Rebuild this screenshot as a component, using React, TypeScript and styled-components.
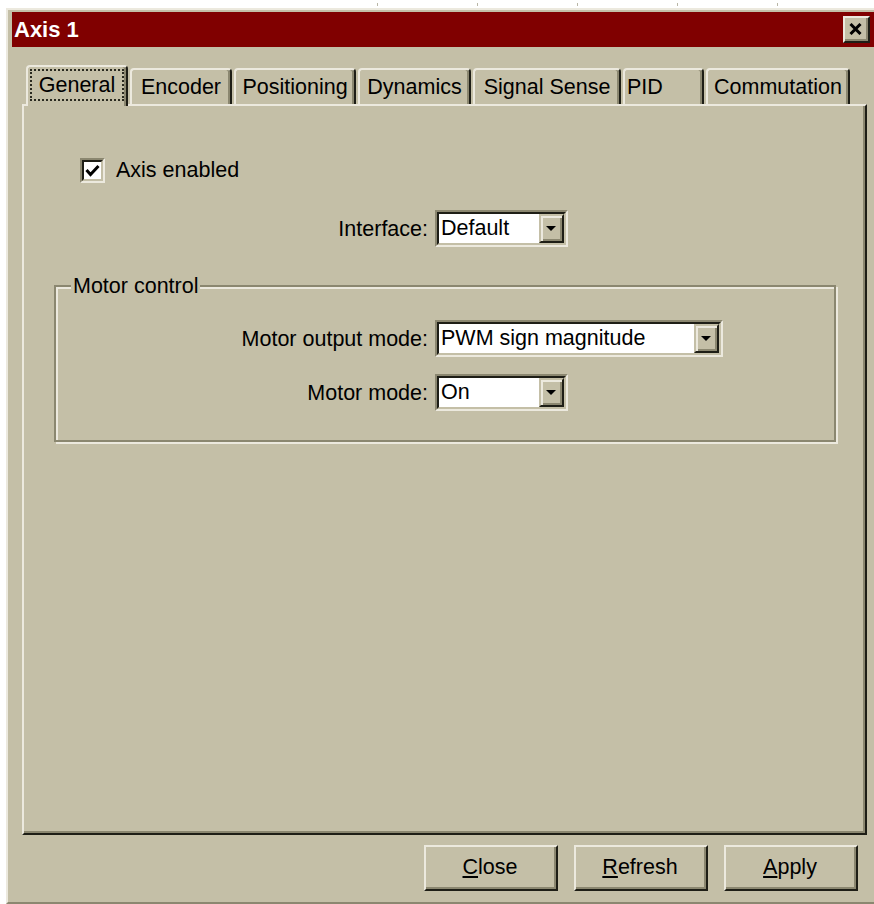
import React from 'react'
import styled, { createGlobalStyle } from 'styled-components'

const face = '#c4bfa7'
const light = '#ece9de'
const shadow = '#8b8770'
const dark = '#1e1e16'
const textSize = '21.5px'

const GlobalStyle = createGlobalStyle`
  html, body { margin: 0; padding: 0; background: #fff; }
  body { font-family: "Liberation Sans", Arial, sans-serif; color: #000; }
  * { box-sizing: border-box; }
`

const Screen = styled.div`
  width: 874px;
  height: 904px;
  overflow: hidden;
  background: #fff;
  display: flex;
  flex-direction: column;
`

// ticks of the ruler peeking out above the dialog
const Ruler = styled.div`
  flex: none;
  height: 8px;
  margin-left: 377px;
  background-image: repeating-linear-gradient(90deg, #b9b6a6 0 1px, transparent 1px 100px);
  background-size: 100% 3px;
  background-position: 0 3px;
  background-repeat: no-repeat;
`

const Window = styled.div`
  flex: 1;
  margin-left: 6px;
  background: ${face};
  border-top: 2px solid ${light};
  border-left: 2px solid ${light};
  border-bottom: 2px solid ${shadow};
  padding: 2px 0 11px 4px;
  display: flex;
  flex-direction: column;
`

const TitleBar = styled.div`
  flex: none;
  height: 35px;
  background: #800000;
  display: flex;
  align-items: center;
  justify-content: space-between;
  padding: 0 4px 0 2px;
`

const Title = styled.span`
  color: #fff;
  font-weight: bold;
  font-size: 22px;
  line-height: 1;
`

const CloseBox = styled.div`
  width: 27px;
  height: 27px;
  background: ${face};
  border: 2px solid;
  border-color: ${light} ${dark} ${dark} ${light};
  box-shadow: inset -2px -2px 0 ${shadow};
  display: flex;
  align-items: center;
  justify-content: center;
  padding: 0 2px 2px 0;
`

const Body = styled.div`
  flex: 1;
  display: flex;
  flex-direction: column;
  padding: 0 7px 0 10px;
`

const TabStrip = styled.div`
  flex: none;
  height: 57px;
  display: flex;
  align-items: flex-end;
  gap: 2px;
  padding-left: 4px;
`

const Tab = styled.div<{ $w: number; $active?: boolean; $start?: boolean }>`
  position: relative;
  z-index: ${p => (p.$active ? 1 : 0)};
  width: ${p => p.$w}px;
  height: ${p => (p.$active ? 41 : 36)}px;
  margin-bottom: ${p => (p.$active ? -2 : 0)}px;
  background: ${face};
  border-top: 2px solid ${light};
  border-left: 2px solid ${light};
  border-right: 2px solid ${dark};
  border-radius: 4px 4px 0 0;
  box-shadow: inset -2px 0 0 ${shadow};
  display: flex;
  align-items: center;
  justify-content: ${p => (p.$start ? 'flex-start' : 'center')};
  padding: ${p => (p.$start ? '0 0 0 2px' : p.$active ? '0 0 3px' : '0')};
  font-size: ${textSize};
  line-height: 24px;
  white-space: nowrap;
`

const FocusLabel = styled.span`
  border: 2px dotted #2a2a20;
  padding: 2px 7px;
`

const Panel = styled.div`
  flex: 1;
  background: ${face};
  border: 2px solid;
  border-color: ${light} ${dark} ${dark} ${light};
  box-shadow: inset -2px -2px 0 ${shadow};
  padding-top: 52px;
  display: flex;
  flex-direction: column;
`

const CheckRow = styled.label`
  display: flex;
  align-items: center;
  gap: 11px;
  margin-left: 56px;
  font-size: ${textSize};
  line-height: 25px;
`

const CheckBox = styled.span`
  width: 25px;
  height: 25px;
  border: 2px solid;
  border-color: ${shadow} ${light} ${light} ${shadow};
  display: flex;
`

const CheckInner = styled.span`
  flex: 1;
  background: #fff;
  border: 2px solid;
  border-color: ${dark} ${face} ${face} ${dark};
  display: flex;
  align-items: center;
  justify-content: center;
`

const FieldRow = styled.div<{ $label: number; $top: number }>`
  display: grid;
  grid-template-columns: ${p => p.$label}px auto;
  column-gap: 7px;
  align-items: center;
  justify-items: start;
  margin-top: ${p => p.$top}px;
`

const FieldLabel = styled.span`
  justify-self: end;
  font-size: ${textSize};
  line-height: 24px;
  white-space: nowrap;
`

const Combo = styled.div<{ $w: number }>`
  width: ${p => p.$w}px;
  height: 37px;
  border: 2px solid;
  border-color: ${shadow} ${light} ${light} ${shadow};
  display: flex;
`

const ComboField = styled.div`
  flex: 1;
  display: flex;
  background: #fff;
  border: 2px solid;
  border-color: ${dark} ${face} ${face} ${dark};
`

const ComboText = styled.span`
  flex: 1;
  padding-left: 2px;
  font-size: ${textSize};
  line-height: 29px;
  white-space: nowrap;
  overflow: hidden;
`

const DropButton = styled.span`
  flex: none;
  width: 25px;
  background: ${face};
  border: 2px solid;
  border-color: ${face} ${dark} ${dark} ${face};
  box-shadow: inset 2px 2px 0 ${light}, inset -2px -2px 0 ${shadow};
  display: flex;
  align-items: center;
  justify-content: center;
  &::after {
    content: '';
    border-left: 5px solid transparent;
    border-right: 5px solid transparent;
    border-top: 5px solid #000;
    margin: 0 1px 1px 0;
  }
`

const Group = styled.div`
  position: relative;
  margin: 38px 29px 0 30px;
  height: 157px;
  border: 2px solid ${shadow};
  box-shadow: inset 2px 2px 0 ${light}, 2px 2px 0 ${light};
  padding-top: 33px;
`

const Legend = styled.span`
  position: absolute;
  top: -13px;
  left: 15px;
  padding: 0 2px;
  background: ${face};
  font-size: ${textSize};
  line-height: 24px;
`

const ButtonRow = styled.div`
  flex: none;
  display: flex;
  justify-content: flex-end;
  gap: 16px;
  margin-top: 10px;
  padding-right: 9px;
`

const Button = styled.button`
  width: 134px;
  height: 46px;
  background: ${face};
  border: 2px solid;
  border-color: ${light} ${dark} ${dark} ${light};
  box-shadow: inset -2px -2px 0 ${shadow};
  font-family: "Liberation Sans", Arial, sans-serif;
  font-size: ${textSize};
  color: #000;
  padding: 0 2px 2px 0;
  cursor: default;
  u { text-decoration-thickness: 2px; text-underline-offset: 2px; }
`

const tabs = [
  { label: 'General', w: 102 },
  { label: 'Encoder', w: 102 },
  { label: 'Positioning', w: 122 },
  { label: 'Dynamics', w: 113 },
  { label: 'Signal Sense', w: 148 },
  { label: 'PID', w: 81, start: true },
  { label: 'Commutation', w: 144 },
]

const Combobox = ({ w, value }: { w: number; value: string }) => (
  <Combo $w={w}>
    <ComboField>
      <ComboText>{value}</ComboText>
      <DropButton />
    </ComboField>
  </Combo>
)

export default function App() {
  return (
    <>
      <GlobalStyle />
      <Screen>
        <Ruler />
        <Window>
          <TitleBar>
            <Title>Axis 1</Title>
            <CloseBox>
              <svg width="13" height="12" viewBox="0 0 13 12">
                <path d="M1.5 1 L11.5 11 M11.5 1 L1.5 11" stroke="#000" strokeWidth="3" />
              </svg>
            </CloseBox>
          </TitleBar>
          <Body>
            <TabStrip>
              {tabs.map((t, i) => (
                <Tab key={t.label} $w={t.w} $active={i === 0} $start={t.start}>
                  {i === 0 ? <FocusLabel>{t.label}</FocusLabel> : t.label}
                </Tab>
              ))}
            </TabStrip>
            <Panel>
              <CheckRow>
                <CheckBox>
                  <CheckInner>
                    <svg width="15" height="14" viewBox="0 0 15 14">
                      <path d="M1.5 6 L5.5 10.5 L13.5 2" fill="none" stroke="#000" strokeWidth="3" />
                    </svg>
                  </CheckInner>
                </CheckBox>
                Axis enabled
              </CheckRow>
              <FieldRow $label={404} $top={27}>
                <FieldLabel>Interface:</FieldLabel>
                <Combobox w={133} value="Default" />
              </FieldRow>
              <Group>
                <Legend>Motor control</Legend>
                <FieldRow $label={372} $top={0}>
                  <FieldLabel>Motor output mode:</FieldLabel>
                  <Combobox w={288} value="PWM sign magnitude" />
                </FieldRow>
                <FieldRow $label={372} $top={17}>
                  <FieldLabel>Motor mode:</FieldLabel>
                  <Combobox w={133} value="On" />
                </FieldRow>
              </Group>
            </Panel>
            <ButtonRow>
              <Button><u>C</u>lose</Button>
              <Button><u>R</u>efresh</Button>
              <Button><u>A</u>pply</Button>
            </ButtonRow>
          </Body>
        </Window>
      </Screen>
    </>
  )
}
